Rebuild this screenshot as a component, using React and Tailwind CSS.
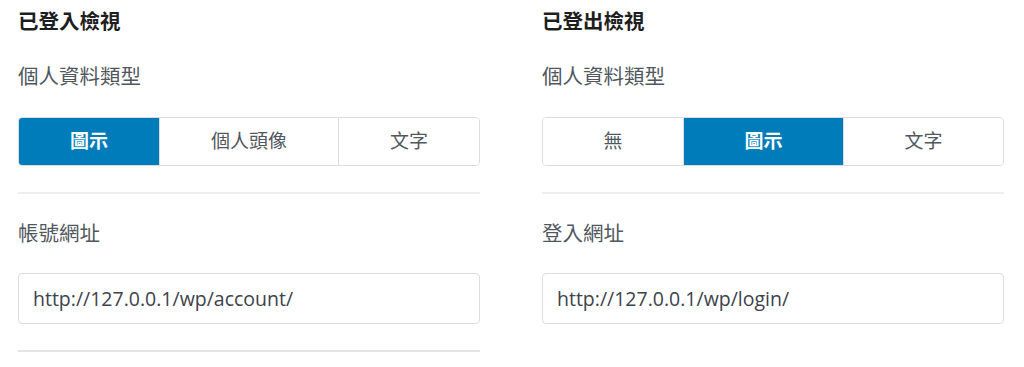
import { useState } from 'react'

const font = "font-['Segoe_UI','Liberation_Sans','Noto_Sans_CJK_TC',sans-serif]"

function Segmented({ options, value, onChange }) {
  return (
    <div className="mt-[26px] flex h-[49px] rounded-[4px] border border-[#dcdcde] overflow-hidden">
      {options.map((opt, i) => (
        <button
          key={opt}
          onClick={() => onChange(opt)}
          className={`flex-auto text-[19px] leading-none ${
            i > 0 ? 'border-l border-[#dcdcde]' : ''
          } ${
            value === opt
              ? 'bg-[#007cba] text-white font-bold'
              : 'bg-white text-[#50575e]'
          }`}
        >
          {opt}
        </button>
      ))}
    </div>
  )
}

function Column({ title, options, initial, urlLabel, url, bottomLine }) {
  const [type, setType] = useState(initial)
  const [value, setValue] = useState(url)

  return (
    <div className="w-[462px]">
      <h2 className="mt-2 text-[20.5px] leading-[28px] font-bold text-[#1e1e1e]">{title}</h2>

      <div className="mt-[27px] text-[20.5px] leading-[28px] text-[#50575e]">個人資料類型</div>
      <Segmented options={options} value={type} onChange={setType} />

      <div className="mt-[26px] h-[2px] bg-[#eeeeee]" />

      <div className="mt-[26px] text-[20.5px] leading-[28px] text-[#50575e]">{urlLabel}</div>
      <input
        type="text"
        value={value}
        onChange={(e) => setValue(e.target.value)}
        className="mt-[25px] block w-full h-[51px] px-[14px] rounded-[4px] border border-[#dcdcde] font-['Open_Sans',sans-serif] text-[19.5px] text-[#3c434a] outline-none"
      />

      {bottomLine && <div className="mt-[26px] h-[2px] bg-[#e4e4e4]" />}
    </div>
  )
}

export default function App() {
  return (
    <div className={`${font} w-[1024px] h-[367px] bg-white pl-[18px] flex gap-[62px]`}>
      <Column
        title="已登入檢視"
        options={['圖示', '個人頭像', '文字']}
        initial="圖示"
        urlLabel="帳號網址"
        url="http://127.0.0.1/wp/account/"
        bottomLine
      />
      <Column
        title="已登出檢視"
        options={['無', '圖示', '文字']}
        initial="圖示"
        urlLabel="登入網址"
        url="http://127.0.0.1/wp/login/"
      />
    </div>
  )
}
